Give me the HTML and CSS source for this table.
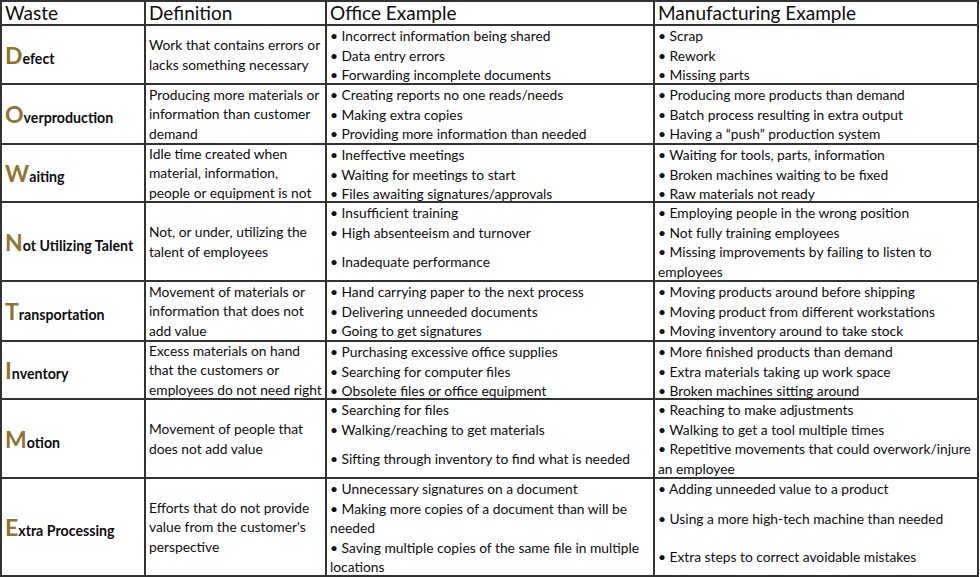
FILE: index.html
```html
<!DOCTYPE html>
<html>
<head>
<meta charset="utf-8">
<link rel="stylesheet" href="styles.css">
</head>
<body>
<div class="grid">
  <div class="cell head">Waste</div>
  <div class="cell head">Definition</div>
  <div class="cell head">Office Example</div>
  <div class="cell head">Manufacturing Example</div>

  <div class="cell waste"><span class="name"><span class="cap">D</span>efect</span></div>
  <div class="cell def">Work that contains errors or<br>lacks something necessary</div>
  <div class="cell ex"><p>• Incorrect information being shared</p><p>• Data entry errors</p><p>• Forwarding incomplete documents</p></div>
  <div class="cell ex"><p>• Scrap</p><p>• Rework</p><p>• Missing parts</p></div>

  <div class="cell waste"><span class="name"><span class="cap">O</span>verproduction</span></div>
  <div class="cell def">Producing more materials or<br>information than customer<br>demand</div>
  <div class="cell ex"><p>• Creating reports no one reads/needs</p><p>• Making extra copies</p><p>• Providing more information than needed</p></div>
  <div class="cell ex"><p>• Producing more products than demand</p><p>• Batch process resulting in extra output</p><p>• Having a “push” production system</p></div>

  <div class="cell waste"><span class="name"><span class="cap">W</span>aiting</span></div>
  <div class="cell def">Idle time created when<br>material, information,<br>people or equipment is not</div>
  <div class="cell ex"><p>• Ineffective meetings</p><p>• Waiting for meetings to start</p><p>• Files awaiting signatures/approvals</p></div>
  <div class="cell ex"><p>• Waiting for tools, parts, information</p><p>• Broken machines waiting to be fixed</p><p>• Raw materials not ready</p></div>

  <div class="cell waste"><span class="name"><span class="cap">N</span>ot Utilizing Talent</span></div>
  <div class="cell def">Not, or under, utilizing the<br>talent of employees</div>
  <div class="cell ex"><p>• Insufficient training</p><p>• High absenteeism and turnover</p><p class="gap10">• Inadequate performance</p></div>
  <div class="cell ex"><p>• Employing people in the wrong position</p><p>• Not fully training employees</p><p>• Missing improvements by failing to listen to<br>employees</p></div>

  <div class="cell waste"><span class="name"><span class="cap">T</span>ransportation</span></div>
  <div class="cell def">Movement of materials or<br>information that does not<br>add value</div>
  <div class="cell ex"><p>• Hand carrying paper to the next process</p><p>• Delivering unneeded documents</p><p>• Going to get signatures</p></div>
  <div class="cell ex"><p>• Moving products around before shipping</p><p>• Moving product from different workstations</p><p>• Moving inventory around to take stock</p></div>

  <div class="cell waste"><span class="name"><span class="cap">I</span>nventory</span></div>
  <div class="cell def">Excess materials on hand<br>that the customers or<br>employees do not need right</div>
  <div class="cell ex"><p>• Purchasing excessive office supplies</p><p>• Searching for computer files</p><p>• Obsolete files or office equipment</p></div>
  <div class="cell ex"><p>• More finished products than demand</p><p>• Extra materials taking up work space</p><p>• Broken machines sitting around</p></div>

  <div class="cell waste"><span class="name"><span class="cap">M</span>otion</span></div>
  <div class="cell def">Movement of people that<br>does not add value</div>
  <div class="cell ex"><p>• Searching for files</p><p>• Walking/reaching to get materials</p><p class="gap10">• Sifting through inventory to find what is needed</p></div>
  <div class="cell ex"><p>• Reaching to make adjustments</p><p>• Walking to get a tool multiple times</p><p>• Repetitive movements that could overwork/injure<br>an employee</p></div>

  <div class="cell waste"><span class="name"><span class="cap">E</span>xtra Processing</span></div>
  <div class="cell def">Efforts that do not provide<br>value from the customer's<br>perspective</div>
  <div class="cell ex"><p>• Unnecessary signatures on a document</p><p>• Making more copies of a document than will be<br>needed</p><p>• Saving multiple copies of the same file in multiple<br>locations</p></div>
  <div class="cell ex"><p>• Adding unneeded value to a product</p><p class="gap10">• Using a more high-tech machine than needed</p><p class="gap19">• Extra steps to correct avoidable mistakes</p></div>
</div>
</body>
</html>
```

FILE: styles.css
```css
html, body {
  margin: 0;
  padding: 0;
  background: #ffffff;
}

.grid {
  display: grid;
  width: 979px;
  box-sizing: border-box;
  padding: 2px;
  gap: 2px;
  background: #333333;
  grid-template-columns: 142px 179px 326px 322px;
  grid-template-rows: 22px 57px 58px 56px 77px 58px 56px 77px 96px;
  font-family: "Lato", "Open Sans", sans-serif;
  color: #0d0d0d;
}

.cell {
  background: #ffffff;
  font-size: 13.8px;
  line-height: 19.6px;
  padding: 0 3px;
  white-space: nowrap;
  min-width: 0;
}

.head {
  font-size: 19px;
  line-height: 22px;
  padding-left: 3px;
}

.waste {
  display: flex;
  align-items: center;
  font-weight: 700;
  font-size: 14.2px;
  padding-top: 4px;
}

.waste .name {
  line-height: 24px;
}

.waste .cap {
  font-size: 23px;
  font-weight: 700;
  color: #8e7430;
}

.def {
  display: flex;
  align-items: center;
}

.ex p {
  margin: 0;
}

.ex .gap10 {
  margin-top: 10px;
}

.ex .gap19 {
  margin-top: 19px;
}
```
